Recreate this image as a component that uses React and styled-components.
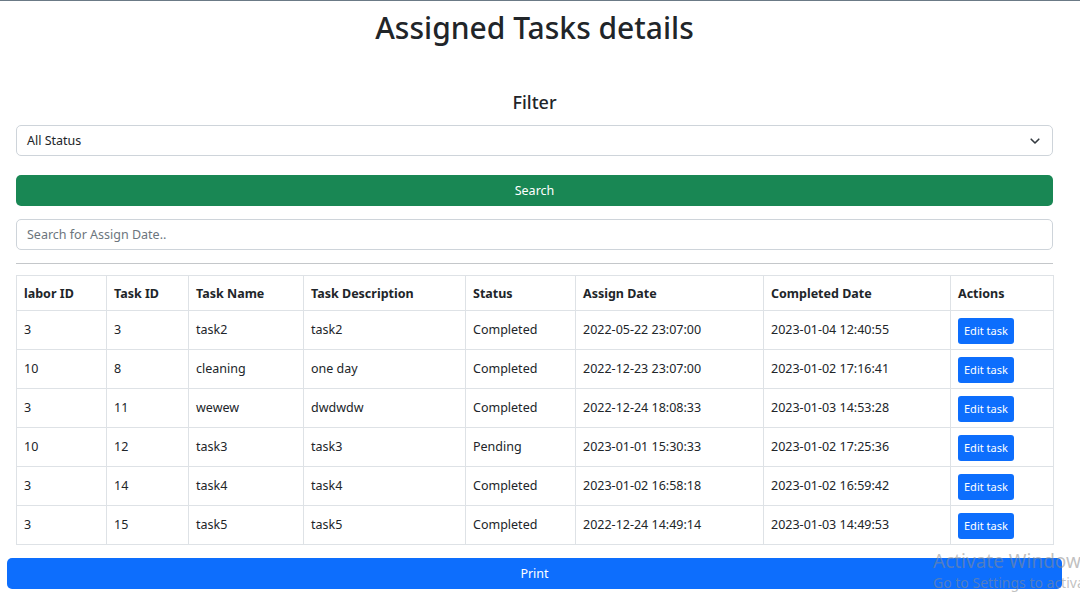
import React from "react";
import styled, { createGlobalStyle } from "styled-components";

const GlobalStyle = createGlobalStyle`
  html, body {
    margin: 0;
    padding: 0;
    background: #fff;
  }
  body {
    font-family: "Noto Sans", "Open Sans", sans-serif;
    color: #212529;
    border-top: 1px solid #6b7a86;
  }
`;

// ─────────────────────────────────────────────────────────────────────────────
// Styled Components
// ─────────────────────────────────────────────────────────────────────────────

const Page = styled.div`
  position: relative;
  padding: 0 27px 0 16px;
  height: 595px;
  overflow: hidden;
`;

const Title = styled.h1`
  margin: 0;
  text-align: center;
  font-size: 30px;
  font-weight: 500;
  line-height: 53px;
`;

const SubTitle = styled.h4`
  margin: 34px 0 9px;
  text-align: center;
  font-size: 18px;
  font-weight: 500;
  line-height: 28px;
`;

const SelectBox = styled.div`
  position: relative;
  height: 31px;
  box-sizing: border-box;
  border: 1px solid #ced4da;
  border-radius: 5px;
  display: flex;
  align-items: center;
  padding: 0 10px;
  font-size: 12.5px;

  svg {
    position: absolute;
    right: 12px;
    top: 12px;
  }
`;

const Button = styled.button`
  display: block;
  width: 100%;
  height: 31px;
  padding: 0;
  border: none;
  border-radius: 5px;
  background: ${({ $variant }) => ($variant === "success" ? "#198754" : "#0d6efd")};
  color: #fff;
  font-family: inherit;
  font-size: 12.5px;
  cursor: pointer;
`;

const SearchButton = styled(Button)`
  margin-top: 19px;
`;

const SearchInput = styled.input`
  display: block;
  width: 100%;
  box-sizing: border-box;
  height: 31px;
  margin-top: 13px;
  padding: 0 10px;
  border: 1px solid #ced4da;
  border-radius: 5px;
  font-family: inherit;
  font-size: 12.5px;
  color: #212529;
  outline: none;

  &::placeholder { color: #6c757d; }
`;

const Divider = styled.hr`
  margin: 13px 0 12px;
  border: 0;
  border-top: 1px solid #c4c7ca;
`;

const Table = styled.table`
  width: 100%;
  border-collapse: collapse;
  table-layout: fixed;
  font-size: 12.5px;
  margin-top: -1px;

  th, td {
    border: 1px solid #dee2e6;
    text-align: left;
    vertical-align: middle;
  }

  th {
    height: 33px;
    padding: 1px 7px 0;
    font-weight: 700;
  }

  td {
    height: 36px;
    padding: 0 7px 2px;
  }
`;

const EditBtn = styled.button`
  display: block;
  background: #0d6efd;
  color: #fff;
  border: none;
  border-radius: 3px;
  height: 26px;
  margin-top: 3px;
  padding: 0 6px 1px;
  font-family: inherit;
  font-size: 11px;
  cursor: pointer;
`;

const PrintRow = styled.div`
  margin: 13px -9px 0 -9px;
`;

const Watermark = styled.div`
  position: absolute;
  left: 933px;
  top: 548px;
  color: rgba(140, 140, 140, 0.55);
  white-space: nowrap;
  pointer-events: none;

  div:first-child { font-size: 19px; line-height: 24px; }
  div:last-child { font-size: 14px; line-height: 20px; }
`;

// ─────────────────────────────────────────────────────────────────────────────
// Data
// ─────────────────────────────────────────────────────────────────────────────

const columns = [
  ["labor ID", 90],
  ["Task ID", 82],
  ["Task Name", 115],
  ["Task Description", 162],
  ["Status", 110],
  ["Assign Date", 188],
  ["Completed Date", 187],
  ["Actions", 103],
];

const rows = [
  [3, 3, "task2", "task2", "Completed", "2022-05-22 23:07:00", "2023-01-04 12:40:55"],
  [10, 8, "cleaning", "one day", "Completed", "2022-12-23 23:07:00", "2023-01-02 17:16:41"],
  [3, 11, "wewew", "dwdwdw", "Completed", "2022-12-24 18:08:33", "2023-01-03 14:53:28"],
  [10, 12, "task3", "task3", "Pending", "2023-01-01 15:30:33", "2023-01-02 17:25:36"],
  [3, 14, "task4", "task4", "Completed", "2023-01-02 16:58:18", "2023-01-02 16:59:42"],
  [3, 15, "task5", "task5", "Completed", "2022-12-24 14:49:14", "2023-01-03 14:49:53"],
];

// ─────────────────────────────────────────────────────────────────────────────
// Component
// ─────────────────────────────────────────────────────────────────────────────

const App = () => (
  <>
    <GlobalStyle />
    <Page>
      <Title>Assigned Tasks details</Title>
      <SubTitle>Filter</SubTitle>

      <SelectBox>
        All Status
        <svg width="10" height="7" viewBox="0 0 10 7" fill="none">
          <path d="M1.2 1.2l3.8 3.8 3.8-3.8" stroke="#343a40" strokeWidth="1.6" strokeLinecap="round" strokeLinejoin="round" />
        </svg>
      </SelectBox>

      <SearchButton $variant="success">Search</SearchButton>
      <SearchInput placeholder="Search for Assign Date.." />
      <Divider />

      <Table>
        <colgroup>
          {columns.map(([name, w]) => (
            <col key={name} style={{ width: w }} />
          ))}
        </colgroup>
        <thead>
          <tr>
            {columns.map(([name]) => (
              <th key={name}>{name}</th>
            ))}
          </tr>
        </thead>
        <tbody>
          {rows.map((r) => (
            <tr key={r[1]}>
              {r.map((v, i) => (
                <td key={i}>{v}</td>
              ))}
              <td>
                <EditBtn>Edit task</EditBtn>
              </td>
            </tr>
          ))}
        </tbody>
      </Table>

      <PrintRow>
        <Button>Print</Button>
      </PrintRow>

      <Watermark>
        <div>Activate Windows</div>
        <div>Go to Settings to activate Windows.</div>
      </Watermark>
    </Page>
  </>
);

export default App;
